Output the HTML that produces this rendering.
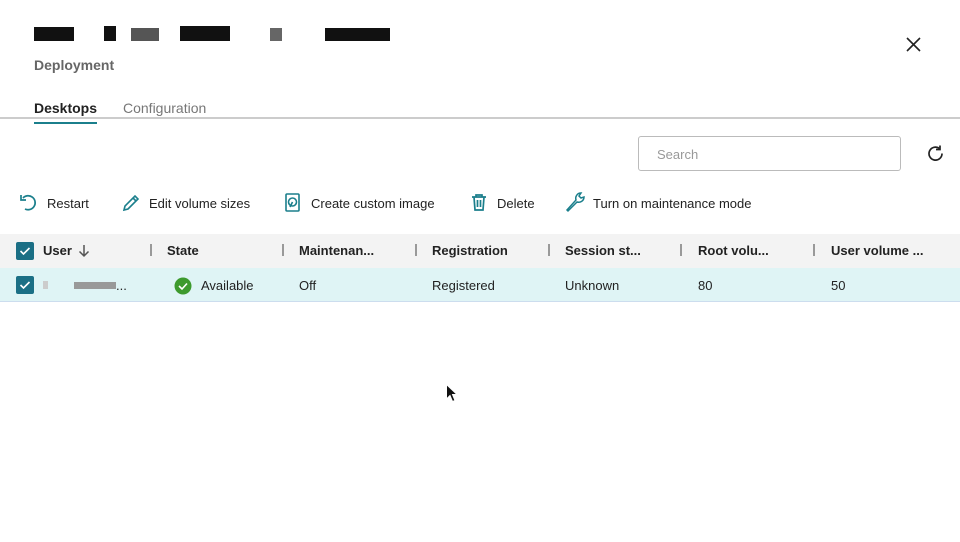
<!DOCTYPE html><html><head><style>
body{margin:0;width:960px;height:542px;background:#fff;font-family:"Liberation Sans",sans-serif;color:#222;position:relative;overflow:hidden}
.a{position:absolute}
.t{font-size:13px;white-space:nowrap}
.blk{position:absolute;background:#111}
</style></head><body>
<div class="blk" style="left:34px;top:27px;width:40px;height:14px"></div>
<div class="blk" style="left:104px;top:26px;width:12px;height:15px"></div>
<div class="blk" style="left:131px;top:28px;width:28px;height:13px;background:#555"></div>
<div class="blk" style="left:180px;top:26px;width:50px;height:15px"></div>
<div class="blk" style="left:270px;top:28px;width:12px;height:13px;background:#666"></div>
<div class="blk" style="left:325px;top:28px;width:65px;height:13px"></div>
<div class="a" style="left:34px;top:57px;font-size:14px;color:#666;font-weight:bold">Deployment</div>
<svg class="a" style="left:905px;top:36px" width="17" height="17"><path d="M2 2L15 15M15 2L2 15" stroke="#222" stroke-width="1.6"/></svg>
<div class="a" style="left:34px;top:100px;font-size:14px;font-weight:bold;color:#222">Desktops</div>
<div class="a" style="left:123px;top:100px;font-size:14px;color:#777">Configuration</div>
<div class="a" style="left:0;top:117px;width:960px;height:2px;background:#ccc"></div>
<div class="a" style="left:34px;top:122px;width:63px;height:2px;background:#1b7f8c"></div>
<div class="a" style="left:638px;top:136px;width:261px;height:33px;border:1px solid #bbb;border-radius:3px"></div>
<div class="a t" style="left:657px;top:147px;color:#999">Search</div>
<svg class="a" style="left:926px;top:144px" width="20" height="20" fill="none" stroke="#222" stroke-width="1.7"><path d="M16 9.5A6.5 6.5 0 1 1 13.5 4.5"/><path d="M14 1.5V5.5H10" /></svg>
<svg class="a" style="left:19px;top:193px" width="20" height="20" fill="none" stroke="#1b7f8c" stroke-width="1.7"><path d="M4 5A7 7 0 1 1 6 16"/><path d="M2 2V7H7"/></svg>
<div class="a t" style="left:47px;top:196px">Restart</div>
<svg class="a" style="left:121px;top:193px" width="20" height="20" fill="none" stroke="#1b7f8c" stroke-width="1.6"><path d="M3 17L4 13L14 3L17 6L7 16Z M12 5L15 8"/></svg>
<div class="a t" style="left:149px;top:196px">Edit volume sizes</div>
<svg class="a" style="left:284px;top:193px" width="18" height="20" fill="none" stroke="#1b7f8c" stroke-width="1.6"><rect x="2" y="1" width="13" height="17" rx="1"/><circle cx="8.5" cy="9" r="4"/><path d="M8.5 9L6 14"/></svg>
<div class="a t" style="left:311px;top:196px">Create custom image</div>
<svg class="a" style="left:470px;top:193px" width="18" height="19" fill="none" stroke="#1b7f8c" stroke-width="1.7"><path d="M2 4H16M6 4V2H12V4M4 4L5 17H13L14 4M7.5 7V14M10.5 7V14"/></svg>
<div class="a t" style="left:497px;top:196px">Delete</div>
<svg class="a" style="left:565px;top:191px" width="22" height="22" fill="none" stroke="#1b7f8c" stroke-width="1.5"><path d="M2 19L3 20L12 11C15 12 19 10 19 6L16 7L14 5L16 2C12 2 10 6 11 9Z"/></svg>
<div class="a t" style="left:593px;top:196px">Turn on maintenance mode</div>
<div class="a" style="left:0;top:234px;width:960px;height:34px;background:#f3f3f3;border-bottom:1px solid #ddd"></div>
<div class="a" style="left:0;top:268px;width:960px;height:33px;background:#dff4f5;border-bottom:1px solid #cde"></div>
<div class="a" style="left:16px;top:242px;width:18px;height:18px;background:#1b6f85;border-radius:2px"></div>
<svg class="a" style="left:16px;top:242px" width="18" height="18"><path d="M4.5 9L7.5 12L13.5 6" stroke="#fff" stroke-width="1.6" fill="none"/></svg>
<div class="a" style="left:16px;top:276px;width:18px;height:18px;background:#1b6f85;border-radius:2px"></div>
<svg class="a" style="left:16px;top:276px" width="18" height="18"><path d="M4.5 9L7.5 12L13.5 6" stroke="#fff" stroke-width="1.6" fill="none"/></svg>
<div class="a t" style="left:43px;top:243px;font-weight:bold">User</div>
<svg class="a" style="left:78px;top:244px" width="12" height="14" fill="none" stroke="#555" stroke-width="1.5"><path d="M6 1V12M1.5 7.5L6 12L10.5 7.5"/></svg>
<div class="a" style="left:150px;top:244px;width:2px;height:12px;background:#999"></div>
<div class="a t" style="left:167px;top:243px;font-weight:bold">State</div>
<div class="a" style="left:282px;top:244px;width:2px;height:12px;background:#999"></div>
<div class="a t" style="left:299px;top:243px;font-weight:bold">Maintenan...</div>
<div class="a" style="left:415px;top:244px;width:2px;height:12px;background:#999"></div>
<div class="a t" style="left:432px;top:243px;font-weight:bold">Registration</div>
<div class="a" style="left:548px;top:244px;width:2px;height:12px;background:#999"></div>
<div class="a t" style="left:565px;top:243px;font-weight:bold">Session st...</div>
<div class="a" style="left:680px;top:244px;width:2px;height:12px;background:#999"></div>
<div class="a t" style="left:698px;top:243px;font-weight:bold">Root volu...</div>
<div class="a" style="left:813px;top:244px;width:2px;height:12px;background:#999"></div>
<div class="a t" style="left:831px;top:243px;font-weight:bold">User volume ...</div>
<div class="a" style="left:43px;top:281px;width:5px;height:8px;background:#ccc"></div>
<div class="a" style="left:74px;top:282px;width:42px;height:7px;background:#999"></div>
<div class="a t" style="left:116px;top:278px">...</div>
<svg class="a" style="left:174px;top:277px" width="18" height="18"><circle cx="9" cy="9" r="8.5" fill="#3d9a2d"/><path d="M5 9L8 12L13 6.5" stroke="#fff" stroke-width="1.6" fill="none"/></svg>
<div class="a t" style="left:201px;top:278px">Available</div>
<div class="a t" style="left:299px;top:278px">Off</div>
<div class="a t" style="left:432px;top:278px">Registered</div>
<div class="a t" style="left:565px;top:278px">Unknown</div>
<div class="a t" style="left:698px;top:278px">80</div>
<div class="a t" style="left:831px;top:278px">50</div>
<svg class="a" style="left:445px;top:383px" width="14" height="22"><path d="M1.5 1.5V16L5 12.5L7.5 18.5L10 17.5L7.5 11.5H12Z" fill="#111" stroke="#fff" stroke-width="1"/></svg>
</body></html>
